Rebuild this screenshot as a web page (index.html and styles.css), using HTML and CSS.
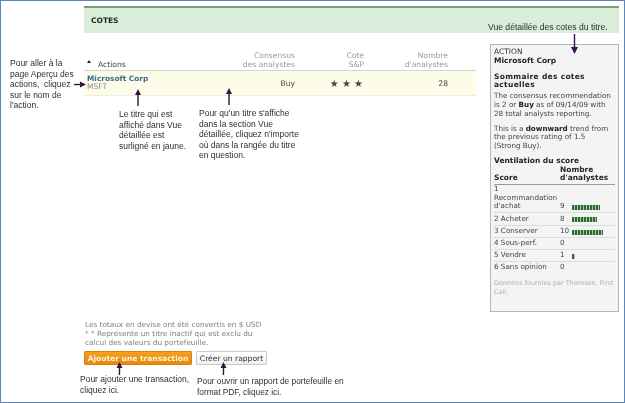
FILE: index.html
```html
<!DOCTYPE html>
<html lang="fr">
<head>
<meta charset="utf-8">
<title>Cotes</title>
<link rel="stylesheet" href="styles.css">
</head>
<body>
<div class="frame">
  <header class="banner"><h1>COTES</h1></header>
  <div class="columns">
    <main class="left">
      <div class="thead">
        <div class="cell-name"><span class="caret"></span>Actions</div>
        <div class="cell-num">Consensus<br>des analystes</div>
        <div class="cell-num">Cote<br>S&amp;P</div>
        <div class="cell-num">Nombre<br>d'analystes</div>
      </div>
      <div class="trow">
        <div class="stock"><a class="stock-name">Microsoft Corp</a><span class="ticker">MSFT</span></div>
        <div class="cell-val">Buy</div>
        <div class="cell-val stars">★ ★ ★</div>
        <div class="cell-val">28</div>
      </div>
      <div class="foot">
        <p class="notes">Les totaux en devise ont été convertis en $ USD<br>* * Représente un titre inactif qui est exclu du<br>calcul des valeurs du portefeuille.</p>
        <div class="buttons">
          <button class="btn-primary">Ajouter une transaction</button>
          <button class="btn-plain">Créer un rapport</button>
        </div>
      </div>
    </main>
    <aside class="detail">
      <div class="kicker">ACTION</div>
      <div class="strong">Microsoft Corp</div>
      <h2>Sommaire des cotes<br>actuelles</h2>
      <p>The consensus recommendation<br>is 2 or <b>Buy</b> as of 09/14/09 with<br>28 total analysts reporting.</p>
      <p>This is a <b>downward</b> trend from<br>the previous rating of 1.5<br>(Strong Buy).</p>
      <h3>Ventilation du score</h3>
      <table class="scores">
        <colgroup><col class="c-label"><col class="c-num"><col></colgroup>
        <thead><tr><th>Score</th><th colspan="2">Nombre d'analystes</th></tr></thead>
        <tbody>
          <tr class="first"><td class="lbl">1 Recommandation d'achat</td><td>9</td><td><span class="bar" style="width:28px"></span></td></tr>
          <tr><td class="lbl">2 Acheter</td><td>8</td><td><span class="bar" style="width:25px"></span></td></tr>
          <tr><td class="lbl">3 Conserver</td><td>10</td><td><span class="bar" style="width:31px"></span></td></tr>
          <tr><td class="lbl">4 Sous-perf.</td><td>0</td><td></td></tr>
          <tr><td class="lbl">5 Vendre</td><td>1</td><td><span class="bar" style="width:3px"></span></td></tr>
          <tr><td class="lbl">6 Sans opinion</td><td>0</td><td></td></tr>
        </tbody>
      </table>
      <p class="source">Données fournies par Thomson, First<br>Call.</p>
    </aside>
  </div>

  <div class="note n-go">Pour aller à la<br>page Aperçu des<br>actions,&nbsp; cliquez<br>sur le nom de<br>l'action.</div>
  <div class="note n-yellow">Le titre qui est<br>affiché dans Vue<br>détaillée est<br>surligné en jaune.</div>
  <div class="note n-click">Pour qu'un titre s'affiche<br>dans la section Vue<br>détaillée, cliquez n'importe<br>où dans la rangée du titre<br>en question.</div>
  <div class="note n-view">Vue détaillée des cotes du titre.</div>
  <div class="note n-add">Pour ajouter une transaction,<br>cliquez ici.</div>
  <div class="note n-pdf">Pour ouvrir un rapport de portefeuille en<br>format PDF, cliquez ici.</div>

  <svg class="arrows" width="625" height="403" viewBox="0 0 625 403" aria-hidden="true">
    <g class="arrow-line">
      <path d="M74 84.500H82"/>
      <path d="M138 106V94"/>
      <path d="M229 105V94"/>
      <path d="M574.500 34V49"/>
      <path d="M119.500 375V366"/>
      <path d="M223.500 375V366"/>
    </g>
    <g class="arrow-head">
      <path d="M86 84.500L80 81.500V87.500Z"/>
      <path d="M138 89L135 95H141Z"/>
      <path d="M229 88L226 94H232Z"/>
      <path d="M574.500 54L571 47H578Z"/>
      <path d="M119.500 362L116.500 368H122.500Z"/>
      <path d="M223.500 362L220.500 368H226.500Z"/>
    </g>
  </svg>
</div>
</body>
</html>
```

FILE: styles.css
```css
* { box-sizing: border-box; }
html, body { margin: 0; padding: 0; background: #fff; }
body { font-family: "DejaVu Sans", Verdana, sans-serif; font-size: 7.600px; color: #333; }

.frame {
  position: relative;
  width: 625px;
  height: 403px;
  overflow: hidden;
  border: 1px solid #5b87bd;
  padding: 5px 5px 0 83px;
  filter: blur(0.3px);
}

.banner {
  height: 27px;
  background: #d9eeda;
  border-top: 2px solid #7f9d72;
  display: flex;
  align-items: center;
  padding-left: 7px;
}
.banner h1 { margin: 0; font-size: 7.500px; font-weight: bold; color: #222; }

.columns { display: flex; gap: 14px; align-items: flex-start; margin-top: 11px; }
.left { width: 392px; flex: none; padding-top: 6px; }

.thead, .trow {
  display: grid;
  grid-template-columns: 130px 81px 69px 84px;
  padding-right: 28px;
}
.thead {
  height: 21px;
  border-bottom: 1px solid #d5d5cf;
  color: #9a9a9a;
  line-height: 9px;
  align-items: end;
  padding-bottom: 1px;
}
.cell-name { color: #444; padding-left: 14px; position: relative; line-height: 9px; }
.caret {
  position: absolute;
  left: 3px;
  top: 0;
  border: 2px solid transparent;
  border-top: 0;
  border-bottom: 3px solid #222;
}
.cell-num { text-align: right; }

.trow {
  height: 25px;
  background: #fdfce9;
  border-bottom: 1px solid #ecece0;
  align-items: center;
}
.stock { padding-left: 3px; line-height: 8.500px; display: flex; flex-direction: column; }
.stock-name { color: #3c6690; font-weight: bold; font-size: 7.400px; }
.ticker { color: #8a8a8a; }
.cell-val { text-align: right; color: #444; }
.stars { font-size: 10px; padding-right: 1px; }

.foot { margin-top: 224px; }
.notes { margin: 0; color: #808080; font-size: 7.300px; line-height: 9px; padding-left: 1px; }
.buttons { display: flex; gap: 4px; margin-top: 4px; align-items: center; }
.btn-primary, .btn-plain {
  font-family: inherit;
  font-size: 7.600px;
  height: 14px;
  padding: 0;
  border-radius: 1px;
  white-space: nowrap;
}
.btn-primary {
  width: 108px;
  background: linear-gradient(#f6a020, #e48a0c);
  border: 1px solid #d98208;
  color: #fff4dc;
  font-weight: bold;
  font-size: 7.500px;
}
.btn-plain {
  width: 71px;
  background: linear-gradient(#fff, #efefef);
  border: 1px solid #c9c9c9;
  color: #333;
}

.detail {
  width: 129px;
  height: 268px;
  flex: none;
  background: #f4f4f4;
  border: 1px solid #b5b5b5;
  padding: 3px 3px;
  line-height: 8.800px;
  font-size: 7.200px;
  color: #444;
}
.kicker { color: #333; font-size: 7.500px; }
.strong { font-weight: bold; color: #222; font-size: 7.500px; }
.detail h2 { margin: 7px 0 2px; font-size: 7.500px; letter-spacing: 0.3px; line-height: 8.800px; color: #222; }
.detail h3 { margin: 4px 0 0; font-size: 7.500px; line-height: 8.800px; color: #222; }
.detail p { margin: 0 0 6px; }
.detail b { color: #222; }

.scores { border-collapse: collapse; width: 100%; table-layout: fixed; }
.c-label { width: 66px; }
.c-num { width: 12px; }
.scores th {
  text-align: left;
  vertical-align: bottom;
  line-height: 8.500px;
  font-size: 7.500px;
  color: #222;
  padding: 0 0 1px;
  border-bottom: 1px solid #9a9a9a;
}
.scores td {
  padding: 1.200px 0;
  border-bottom: 1px solid #dcdcdc;
  vertical-align: bottom;
  line-height: 8.800px;
}
.scores .first td { padding-top: 0; }
.scores tbody tr:last-child td { border-bottom: 0; }
.bar {
  display: block;
  height: 5px;
  margin-bottom: 1px;
  background: repeating-linear-gradient(90deg, #2c6a30 0, #2c6a30 2px, #a9c7a9 2px, #a9c7a9 3px);
}
.detail .source { margin-top: 6px; color: #b0b0b0; font-size: 6.500px; line-height: 8.800px; }

.note {
  position: absolute;
  font-family: "Liberation Sans", Arial, sans-serif;
  font-size: 8.500px;
  line-height: 10.500px;
  color: #2e2e2e;
  white-space: nowrap;
}
.n-go { left: 9px; top: 57px; }
.n-yellow { left: 118px; top: 108px; }
.n-click { left: 198px; top: 107px; }
.n-view { left: 487px; top: 21px; font-size: 8.600px; }
.n-add { left: 79px; top: 373px; }
.n-pdf { left: 196px; top: 375px; font-size: 8.300px; }

.arrows { position: absolute; left: -1px; top: -1px; pointer-events: none; }
.arrow-line { stroke: #3a0f4a; stroke-width: 1.400; fill: none; }
.arrow-head { fill: #3a0f4a; }
```
